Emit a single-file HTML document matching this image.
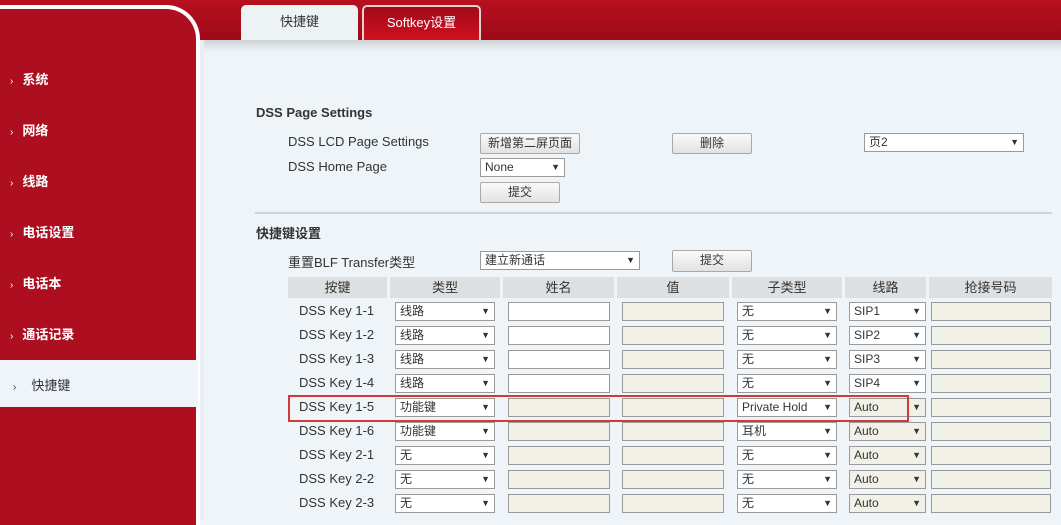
<!DOCTYPE html>
<html><head><meta charset="utf-8"><style>
*{box-sizing:border-box;margin:0;padding:0}
body{width:1061px;height:518px;overflow:hidden;background:#eef4f7;font-family:"Liberation Sans","Noto Sans CJK SC",sans-serif;font-size:13px;color:#333;position:relative}
.a{position:absolute}
.top{left:0;top:0;width:1061px;height:40px;background:linear-gradient(#b8101f,#9d0a18)}
.shadow{left:203px;top:40px;width:858px;height:12px;background:linear-gradient(#cfd3d6,#eef4f7)}
.side{left:0;top:5px;width:200px;height:520px;background:#ad0f20;border-top:4px solid #fff;border-right:4px solid #fff;border-top-right-radius:34px}
.gap{left:200px;top:40px;width:4px;height:480px;background:#e8eef1}
.tab{top:5px;height:35px;border-radius:5px 5px 0 0;text-align:center;line-height:34px;font-size:13px}
.mi{left:10px;color:#fff;font-weight:bold;font-size:13px}
.mi span{font-weight:normal;font-size:10px;margin-right:9px}
.btn{background:linear-gradient(#fafafa,#e2e2e2);border:1px solid #a8a8a8;text-align:center;font-size:12px;line-height:18px;color:#333;border-radius:2px}
.sel{background:#fff;border:1px solid #9a9a9a;font-size:12px;line-height:17px;padding-left:4px;color:#333}
.sel:after{content:"▼";position:absolute;right:4px;top:0;font-size:9px}
.inp{background:#fff;border:1px solid #9a9a9a;height:19px}
.dis{background:#f1f1e8}
.th{top:277px;height:21px;background:#dedfe0;text-align:center;line-height:21px;color:#333}
.lbl{color:#333;font-size:13px}
</style></head><body>
<div class="a top"></div>
<div class="a tab" style="left:241px;width:117px;background:#edf2f5;color:#333">快捷键</div>
<div class="a tab" style="left:362px;width:119px;background:linear-gradient(#a00a18,#d01020);color:#fff;border:2px solid #e8d0d0;border-bottom:none;line-height:31px">Softkey设置</div>
<div class="a shadow"></div>
<div class="a side"></div>
<div class="a gap"></div>
<div class="a mi" style="top:69px"><span>›</span>系统</div>
<div class="a mi" style="top:120px"><span>›</span>网络</div>
<div class="a mi" style="top:171px"><span>›</span>线路</div>
<div class="a mi" style="top:222px"><span>›</span>电话设置</div>
<div class="a mi" style="top:273px"><span>›</span>电话本</div>
<div class="a mi" style="top:324px"><span>›</span>通话记录</div>
<div class="a" style="left:0;top:360px;width:198px;height:47px;background:#eef4f9"></div>
<div class="a" style="left:13px;top:375px;color:#333;font-size:13px"><span style="font-size:10px;margin-right:15px">›</span>快捷键</div>

<div class="a" style="left:256px;top:105px;font-weight:bold;font-size:13px;color:#333">DSS Page Settings</div>
<div class="a lbl" style="left:288px;top:134px">DSS LCD Page Settings</div>
<div class="a lbl" style="left:288px;top:159px">DSS Home Page</div>
<div class="a btn" style="left:480px;top:133px;width:100px;height:21px">新增第二屏页面</div>
<div class="a btn" style="left:672px;top:133px;width:80px;height:21px">删除</div>
<div class="a sel" style="left:864px;top:133px;width:160px;height:19px">页2</div>
<div class="a sel" style="left:480px;top:158px;width:85px;height:19px">None</div>
<div class="a btn" style="left:480px;top:182px;width:80px;height:21px">提交</div>
<div class="a" style="left:255px;top:212px;width:797px;height:2px;background:#cfd4d7"></div>
<div class="a" style="left:256px;top:223px;font-weight:bold;color:#333">快捷键设置</div>
<div class="a lbl" style="left:288px;top:252px">重置BLF Transfer类型</div>
<div class="a sel" style="left:480px;top:251px;width:160px;height:19px">建立新通话</div>
<div class="a btn" style="left:672px;top:250px;width:80px;height:22px">提交</div>

<div class="a th" style="left:288px;width:99px">按键</div>
<div class="a th" style="left:390px;width:110px">类型</div>
<div class="a th" style="left:503px;width:111px">姓名</div>
<div class="a th" style="left:617px;width:112px">值</div>
<div class="a th" style="left:732px;width:110px">子类型</div>
<div class="a th" style="left:845px;width:81px">线路</div>
<div class="a th" style="left:929px;width:123px">抢接号码</div>

<div id="rows"></div>
<script>
var d=[["1-1","线路",0,"无","SIP1",0],["1-2","线路",0,"无","SIP2",0],["1-3","线路",0,"无","SIP3",0],["1-4","线路",0,"无","SIP4",0],["1-5","功能键",1,"Private Hold","Auto",1],["1-6","功能键",1,"耳机","Auto",1],["2-1","无",1,"无","Auto",1],["2-2","无",1,"无","Auto",1],["2-3","无",1,"无","Auto",1]];
var h="";
d.forEach(function(r,i){var y=302+i*24;
h+='<div class="a lbl" style="left:299px;top:'+(y+1)+'px">DSS Key '+r[0]+'</div>';
h+='<div class="a sel" style="left:395px;top:'+y+'px;width:100px;height:19px">'+r[1]+'</div>';
h+='<div class="a inp'+(r[2]?' dis':'')+'" style="left:508px;top:'+y+'px;width:102px"></div>';
h+='<div class="a inp dis" style="left:622px;top:'+y+'px;width:102px"></div>';
h+='<div class="a sel" style="left:737px;top:'+y+'px;width:100px;height:19px">'+r[3]+'</div>';
h+='<div class="a sel'+(r[5]?' dis':'')+'" style="left:849px;top:'+y+'px;width:77px;height:19px">'+r[4]+'</div>';
h+='<div class="a inp dis" style="left:931px;top:'+y+'px;width:120px"></div>';
});
document.getElementById("rows").innerHTML=h;
</script>
<div class="a" style="left:288px;top:395px;width:621px;height:27px;border:2px solid #d23a3a"></div>
</body></html>
